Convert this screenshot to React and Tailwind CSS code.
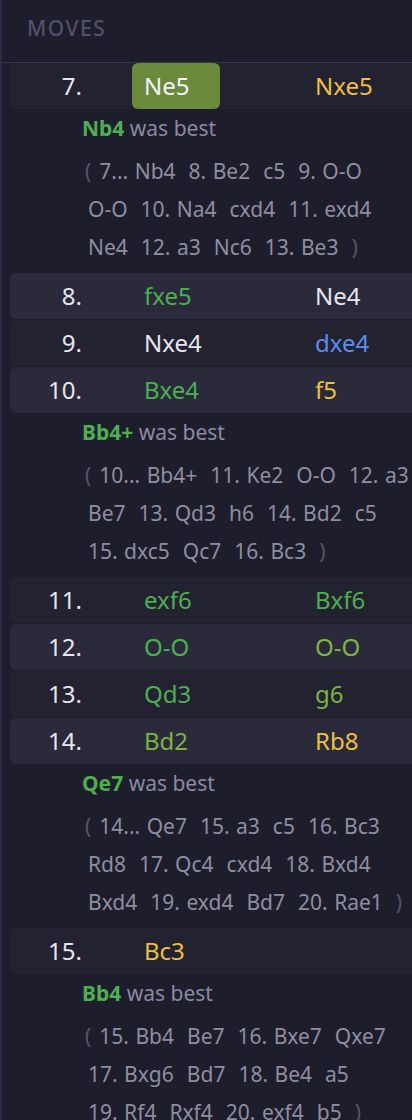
import React from 'react';

const tone = {
  white: 'text-[#e6e6ee]',
  green: 'text-[#4caf50]',
  lime: 'text-[#7cb342]',
  yellow: 'text-[#f0bf3c]',
  blue: 'text-[#5b8def]',
};

const moves = [
  {
    n: 7,
    w: { t: 'Ne5', c: 'white', active: true },
    b: { t: 'Nxe5', c: 'yellow' },
    best: 'Nb4',
    lines: [
      ['7... Nb4', '8. Be2', 'c5', '9. O-O'],
      ['O-O', '10. Na4', 'cxd4', '11. exd4'],
      ['Ne4', '12. a3', 'Nc6', '13. Be3'],
    ],
  },
  { n: 8, w: { t: 'fxe5', c: 'green' }, b: { t: 'Ne4', c: 'white' } },
  { n: 9, w: { t: 'Nxe4', c: 'white' }, b: { t: 'dxe4', c: 'blue' } },
  {
    n: 10,
    w: { t: 'Bxe4', c: 'green' },
    b: { t: 'f5', c: 'yellow' },
    best: 'Bb4+',
    lines: [
      ['10... Bb4+', '11. Ke2', 'O-O', '12. a3'],
      ['Be7', '13. Qd3', 'h6', '14. Bd2', 'c5'],
      ['15. dxc5', 'Qc7', '16. Bc3'],
    ],
  },
  { n: 11, w: { t: 'exf6', c: 'green' }, b: { t: 'Bxf6', c: 'green' } },
  { n: 12, w: { t: 'O-O', c: 'green' }, b: { t: 'O-O', c: 'lime' } },
  { n: 13, w: { t: 'Qd3', c: 'green' }, b: { t: 'g6', c: 'lime' } },
  {
    n: 14,
    w: { t: 'Bd2', c: 'lime' },
    b: { t: 'Rb8', c: 'yellow' },
    best: 'Qe7',
    lines: [
      ['14... Qe7', '15. a3', 'c5', '16. Bc3'],
      ['Rd8', '17. Qc4', 'cxd4', '18. Bxd4'],
      ['Bxd4', '19. exd4', 'Bd7', '20. Rae1'],
    ],
  },
  {
    n: 15,
    w: { t: 'Bc3', c: 'yellow' },
    best: 'Bb4',
    lines: [
      ['15. Bb4', 'Be7', '16. Bxe7', 'Qxe7'],
      ['17. Bxg6', 'Bd7', '18. Be4', 'a5'],
      ['19. Rf4', 'Rxf4', '20. exf4', 'b5'],
    ],
  },
];

function MoveCell({ move }) {
  if (!move) return <div className="w-[88px]" />;
  return (
    <div
      className={`w-[88px] h-full pl-[12px] flex items-center rounded-[6px] ${
        move.active ? 'bg-[#6b8a3b] text-[#f4f4f8]' : tone[move.c]
      }`}
    >
      {move.t}
    </div>
  );
}

function Variation({ lines }) {
  return (
    <div className="pt-[5px] pb-[7px] text-[21px] leading-[38px] text-[#8e8ea0] [word-spacing:1px]">
      {lines.map((tokens, i) => (
        <div key={i} className={`whitespace-nowrap ${i === 0 ? 'pl-[75px]' : 'pl-[78px]'}`}>
          {i === 0 && <span className="mr-[8px] text-[#55556a]">(</span>}
          {tokens.map((tok, j) => (
            <span key={j} className="mr-[13px]">
              {tok}
            </span>
          ))}
          {i === lines.length - 1 && <span className="text-[#55556a]">)</span>}
        </div>
      ))}
    </div>
  );
}

export default function App() {
  return (
    <div
      className="min-h-[1120px] w-[412px] overflow-hidden bg-[#1e1d2c] border-l-2 border-[#2d2b46]"
      style={{ fontFamily: '"Noto Sans", "Open Sans", sans-serif' }}
    >
      <div className="h-[63px] pl-[25px] pt-[13px] border-b border-[#363450]">
        <h2 className="text-[21px] leading-[30px] font-medium tracking-[1.5px] text-[#51516a]">MOVES</h2>
      </div>

      <div className="w-[440px] pl-[8px]">
        {moves.map((m) => (
          <div key={m.n}>
            <div
              className={`h-[46px] mb-px flex items-center rounded-[6px] text-[24px] ${
                m.n % 2 === 0 ? 'bg-[#2b2a3a]' : 'bg-[#232231]'
              }`}
            >
              <div className="w-[72px] text-right text-[#e6e6ee]">{m.n}.</div>
              <div className="ml-[50px] h-full">
                <MoveCell move={m.w} />
              </div>
              <div className="ml-[83px] h-full">
                <MoveCell move={m.b} />
              </div>
            </div>
            {m.best && (
              <div>
                <div className="pl-[72px] -mt-px text-[21px] leading-[38px] text-[#8a8aa2]">
                  <span className="font-bold text-[#4caf50]">{m.best}</span> was best
                </div>
                <Variation lines={m.lines} />
              </div>
            )}
          </div>
        ))}
      </div>
    </div>
  );
}
